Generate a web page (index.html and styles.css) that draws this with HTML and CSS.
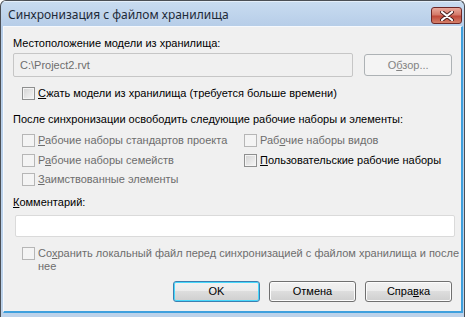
FILE: index.html
```html
<!DOCTYPE html>
<html lang="ru">
<head>
    <meta charset="UTF-8">
    <title>Синхронизация с файлом хранилища</title>
    <link rel="stylesheet" href="styles.css">
</head>
<body>
    <div class="window">
        <div class="titlebar">
            <span class="title">Синхронизация с файлом хранилища</span>
            <button class="close" type="button">
                <svg width="14" height="10" viewBox="0 0 14 10">
                    <path d="M2 1 L12 9 M12 1 L2 9" stroke="#4a2020" stroke-width="4" stroke-linecap="round"/>
                    <path d="M2 1 L12 9 M12 1 L2 9" stroke="#fff" stroke-width="2.2" stroke-linecap="round"/>
                </svg>
            </button>
        </div>

        <div class="client">
            <div class="label">Местоположение модели из хранилища:</div>
            <div class="path-row">
                <div class="textbox disabled">C:\Project2.rvt</div>
                <button class="btn disabled" type="button">О<u>б</u>зор...</button>
            </div>

            <label class="check compress">
                <span class="box on"></span>
                <span><u>С</u>жать модели из хранилища (требуется больше времени)</span>
            </label>

            <div class="label heading">После синхронизации освободить следующие рабочие наборы и элементы:</div>
            <div class="release-grid">
                <label class="check off">
                    <span class="box"></span>
                    <span><u>Р</u>абочие наборы стандартов проекта</span>
                </label>
                <label class="check off">
                    <span class="box"></span>
                    <span>Раб<u>о</u>чие наборы видов</span>
                </label>
                <label class="check off">
                    <span class="box"></span>
                    <span>Р<u>а</u>бочие наборы семейств</span>
                </label>
                <label class="check">
                    <span class="box on"></span>
                    <span><u>П</u>ользовательские рабочие наборы</span>
                </label>
                <label class="check off">
                    <span class="box"></span>
                    <span><u>З</u>аимствованные элементы</span>
                </label>
            </div>

            <div class="label comment-label"><u>К</u>омментарий:</div>
            <div class="textbox comment"></div>

            <label class="check off save">
                <span class="box"></span>
                <span>Со<u>х</u>ранить локальный файл перед синхронизацией с файлом хранилища и после нее</span>
            </label>

            <div class="actions">
                <button class="btn default" type="button">OK</button>
                <button class="btn" type="button">Отмена</button>
                <button class="btn" type="button">Спра<u>в</u>ка</button>
            </div>
        </div>
    </div>
</body>
</html>
```

FILE: styles.css
```css
body {
    margin: 0;
    background: #fff;
    font-family: "Liberation Sans", Arial, sans-serif;
    font-size: 11px;
    line-height: 13px;
    color: #000;
}

.window {
    width: 463px;
    height: 316px;
    border: 1px solid #4b4f55;
    border-bottom: none;
    border-radius: 6px 6px 0 0;
    background: linear-gradient(#c9dcf0, #b6cde8 26px, #bcd2ea);
    overflow: hidden;
}

.titlebar {
    height: 25px;
    display: flex;
    align-items: center;
    justify-content: space-between;
    padding: 0 2px 0 7px;
    border-top: 1px solid #e4eef9;
    box-sizing: border-box;
}

.title {
    font-family: "Noto Sans", "Liberation Sans", sans-serif;
    font-size: 12px;
    color: #1e2a38;
    margin-top: 1px;
}

.close {
    width: 31px;
    height: 17px;
    margin-top: 3px;
    padding: 0;
    border: 1px solid #6c2626;
    border-radius: 3px;
    background: linear-gradient(#e9a99c, #d47a6a 45%, #c0493a 55%, #d4806a);
    display: flex;
    align-items: center;
    justify-content: center;
}

.client {
    height: 287px;
    margin: 0 0 0 2px;
    padding: 10px 9px 0 9px;
    background: #f0f0f0;
    border: 1px solid #f6f9fd;
    border-right: 2px solid #3fa0dd;
    border-bottom: 2px solid #3fa0dd;
    box-sizing: border-box;
    width: 460px;
}

.label {
    height: 13px;
    white-space: nowrap;
}

.path-row {
    margin-top: 3px;
    display: flex;
    align-items: center;
    gap: 11px;
}

.textbox {
    box-sizing: border-box;
    border: 1px solid #c6c6c6;
    border-radius: 2px;
    background: #fff;
    padding: 0 6px;
    display: flex;
    align-items: center;
}

.textbox.disabled {
    width: 341px;
    height: 24px;
    background: #f0f0f0;
    color: #6d6d6d;
}

.btn {
    width: 88px;
    height: 22px;
    box-sizing: border-box;
    font: inherit;
    color: #000;
    border: 1px solid #707070;
    border-radius: 3px;
    background: linear-gradient(#f2f2f2, #ebebeb 50%, #dddddd 50%, #cfcfcf);
    box-shadow: inset 0 0 0 1px #fcfcfc;
    padding: 0;
}

.btn.disabled {
    color: #838383;
    border-color: #adb2b5;
    background: #f4f4f4;
    box-shadow: none;
}

.btn.default {
    border-color: #3c7fb1;
    box-shadow: inset 0 0 0 1px #48d8fb;
}

.check {
    display: flex;
    align-items: flex-start;
    gap: 3px;
    white-space: nowrap;
}

.check.off {
    color: #6d6d6d;
}

.box {
    flex: none;
    width: 13px;
    height: 13px;
    box-sizing: border-box;
    border: 1px solid #b6b6b6;
    background: #f4f4f4;
}

.box.on {
    border-color: #8e8f8f;
    background: linear-gradient(135deg, #d3d3d3, #f6f6f6);
    box-shadow: inset 0 0 0 1px #f4f4f4;
}

.compress {
    margin: 10px 0 0 9px;
}

.heading {
    margin-top: 13px;
}

.release-grid {
    margin: 8px 0 0 9px;
    display: grid;
    grid-template-columns: 222px auto;
    grid-auto-rows: 13px;
    row-gap: 6.5px;
}

.comment-label {
    margin-top: 10px;
}

.textbox.comment {
    margin: 6px 0 0 2px;
    width: 440px;
    height: 22px;
    border-color: #dadada;
}

.save {
    margin: 10px 0 0 9px;
    white-space: normal;
    width: 440px;
}

.actions {
    margin-top: 8px;
    display: flex;
    justify-content: flex-end;
    gap: 9px;
}

.actions .btn {
    width: 87px;
    height: 21px;
}
```
